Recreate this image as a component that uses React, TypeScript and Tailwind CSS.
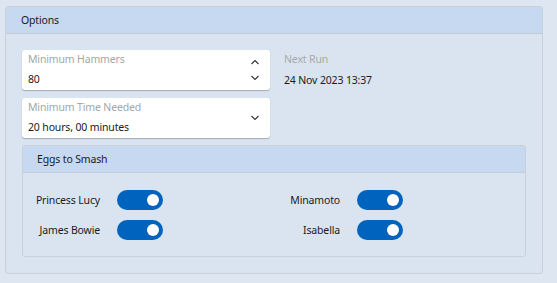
const font = { fontFamily: '"Noto Sans", "Open Sans", sans-serif' };

function Chevron({ up }: { up?: boolean }) {
  return (
    <svg width="10" height="6" viewBox="0 0 10 6" className="block">
      <path
        d={up ? 'M1.5 5 L5 1.5 L8.5 5' : 'M1.5 1 L5 4.5 L8.5 1'}
        fill="none"
        stroke="#333"
        strokeWidth="1.1"
      />
    </svg>
  );
}

function Field({ label, value, spin }: { label: string; value: string; spin?: boolean }) {
  return (
    <div className="relative h-[40px] w-[248px] rounded-[3px] bg-white shadow-[0_1px_1px_rgba(0,0,0,0.25)]">
      <div className="absolute left-[6px] top-[2px] text-[#a6a6a6]">{label}</div>
      <div className="absolute left-[6px] top-[22px] text-[#1a1a1a]">{value}</div>
      {spin ? (
        <div className="absolute right-[10px] top-[9px] flex flex-col gap-[10px]">
          <Chevron up />
          <Chevron />
        </div>
      ) : (
        <div className="absolute right-[10px] top-[17px]">
          <Chevron />
        </div>
      )}
    </div>
  );
}

function Toggle() {
  return (
    <div className="flex h-[20px] w-[46px] items-center justify-end rounded-full bg-[#0064be] pr-[4px]">
      <div className="h-[12px] w-[12px] rounded-full bg-white" />
    </div>
  );
}

export default function App() {
  const eggs = [
    ['Princess Lucy', 'Minamoto'],
    ['James Bowie', 'Isabella'],
  ];

  return (
    <div
      className="h-[283px] w-[557px] bg-[#dde6f1] pl-[5px] pt-[6px] text-[10.5px] tracking-[-0.15px]"
      style={font}
    >
      <div className="h-[268px] w-[538px] overflow-hidden rounded-[3px] border border-[#c9d0d9] bg-[#dae4f0]">
        <div className="flex h-[27px] items-center border-b border-[#c3ccd7] bg-[#c6d9f0] pl-[15px] pt-[2px] text-[#1a1a1a]">
          Options
        </div>
        <div className="pl-[16px] pt-[16px]">
          <div className="flex gap-[14px]">
            <div className="flex flex-col gap-[8px]">
              <Field label="Minimum Hammers" value="80" spin />
              <Field label="Minimum Time Needed" value="20 hours, 00 minutes" />
            </div>
            <div className="pt-[2px]">
              <div className="text-[#a9a9a9]">Next Run</div>
              <div className="mt-[5px] text-[#1a1a1a]">24 Nov 2023 13:37</div>
            </div>
          </div>
          <div className="mt-[7px] h-[112px] w-[504px] overflow-hidden rounded-[3px] border border-[#c9d0d9]">
            <div className="flex h-[27px] items-center border-b border-[#c3ccd7] bg-[#c6d9f0] pl-[14px] pt-[2px] text-[#1a1a1a]">
              Eggs to Smash
            </div>
            <div className="grid grid-cols-[77px_46px_160px_46px] gap-x-[17px] gap-y-[10px] pt-[17px] text-[#1a1a1a]">
              {eggs.map(([a, b]) => (
                <div key={a} className="contents">
                  <div className="flex items-center justify-end pt-[2px]">{a}</div>
                  <Toggle />
                  <div className="flex items-center justify-end pt-[2px]">{b}</div>
                  <Toggle />
                </div>
              ))}
            </div>
          </div>
        </div>
      </div>
    </div>
  );
}
